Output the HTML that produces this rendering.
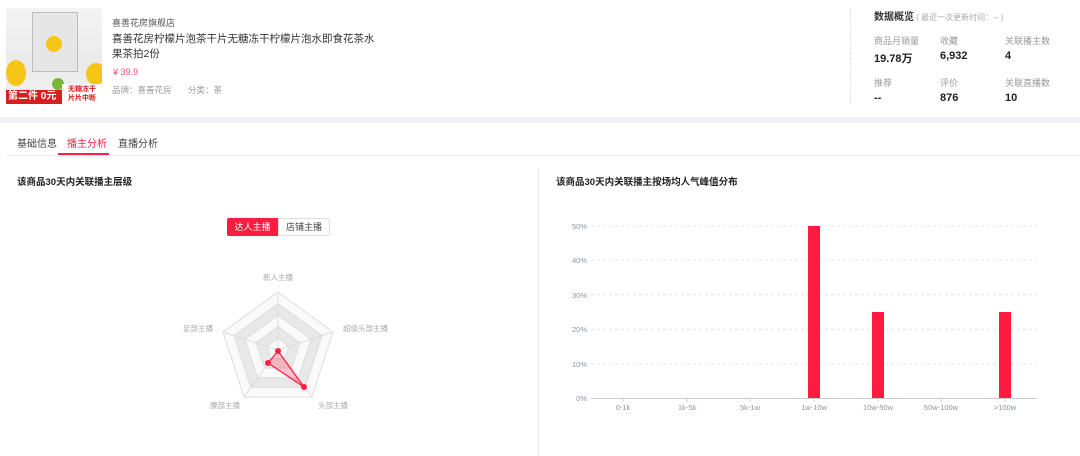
<!DOCTYPE html>
<html><head><meta charset="utf-8"><style>
*{margin:0;padding:0;box-sizing:border-box}
body{width:1080px;height:456px;background:#fff;font-family:"Liberation Sans","Noto Sans CJK SC",sans-serif;position:relative;overflow:hidden;color:#333}
.a{position:absolute;white-space:nowrap}
.s{font-size:9px;color:#999}
.v{font-size:11px;font-weight:bold;color:#222}
</style></head><body>
<!-- product image -->
<div class="a" style="left:6px;top:8px;width:96px;height:96px;background:linear-gradient(180deg,#f4f4f4 0%,#eaeaea 60%,#f2f2f2 100%);overflow:hidden">
  <div class="a" style="left:26px;top:4px;width:46px;height:60px;background:#e6e6e6;border:1px solid #bbb"></div>
  <div class="a" style="left:40px;top:28px;width:16px;height:16px;border-radius:50%;background:#f5c518"></div>
  <div class="a" style="left:0;top:52px;width:20px;height:26px;border-radius:50%;background:#f5c518"></div>
  <div class="a" style="left:80px;top:55px;width:20px;height:22px;border-radius:50%;background:#f5c518"></div>
  <div class="a" style="left:46px;top:70px;width:12px;height:12px;border-radius:50%;background:#7bb53a"></div>
  <div class="a" style="left:0;top:82px;width:56px;height:14px;background:#d81e1e;color:#fff;font-size:10px;font-weight:bold;line-height:14px;padding-left:2px">第二件 0元</div>
  <div class="a" style="left:56px;top:76px;width:40px;height:20px;background:#fff;color:#d81e1e;font-size:7px;font-weight:bold;line-height:9px;text-align:center;padding-top:1px">无糖冻干<br>片片中断</div>
</div>
<div class="a" style="left:112px;top:16px;font-size:9px;color:#555">喜善花房旗舰店</div>
<div class="a" style="left:112px;top:32px;font-size:10.5px;color:#333;line-height:15px">喜善花房柠檬片泡茶干片无糖冻干柠檬片泡水即食花茶水<br>果茶拍2份</div>
<div class="a" style="left:113px;top:67px;font-size:9px;color:#f0506e">¥ 39.9</div>
<div class="a" style="left:112px;top:84px;font-size:8.5px;color:#999">品牌：喜善花房&nbsp;&nbsp;&nbsp;&nbsp;&nbsp;&nbsp;&nbsp;分类：茶</div>
<!-- dashed divider -->
<div class="a" style="left:850px;top:8px;height:96px;border-left:1px dashed #e4e4e4"></div>
<div class="a" style="left:874px;top:8px;font-size:10px;color:#333;font-weight:bold">数据概览<span style="font-weight:normal;font-size:8px;color:#aaa"> ( 最近一次更新时间：-- )</span></div>
<div class="a s" style="left:874px;top:34px">商品月销量</div>
<div class="a s" style="left:940px;top:34px">收藏</div>
<div class="a s" style="left:1005px;top:34px">关联播主数</div>
<div class="a v" style="left:874px;top:50px">19.78万</div>
<div class="a v" style="left:940px;top:50px">6,932</div>
<div class="a v" style="left:1005px;top:50px">4</div>
<div class="a s" style="left:874px;top:76px">推荐</div>
<div class="a s" style="left:940px;top:76px">评价</div>
<div class="a s" style="left:1005px;top:76px">关联直播数</div>
<div class="a v" style="left:874px;top:92px">--</div>
<div class="a v" style="left:940px;top:92px">876</div>
<div class="a v" style="left:1005px;top:92px">10</div>
<!-- gray band -->
<div class="a" style="left:0;top:117px;width:1080px;height:6px;background:#f0f1f5"></div>
<!-- tabs -->
<div class="a" style="left:17px;top:135px;font-size:10px;color:#444">基础信息</div>
<div class="a" style="left:67px;top:135px;font-size:10px;color:#ff1e46">播主分析</div>
<div class="a" style="left:118px;top:135px;font-size:10px;color:#444">直播分析</div>
<div class="a" style="left:6px;top:155px;width:1074px;height:1px;background:#eee"></div>
<div class="a" style="left:58px;top:153px;width:51px;height:2px;background:#ff1e46"></div>
<!-- panels -->
<div class="a" style="left:538px;top:167px;width:1px;height:289px;background:#eee"></div>
<div class="a" style="left:17px;top:174px;font-size:9.5px;font-weight:bold;color:#222">该商品30天内关联播主层级</div>
<div class="a" style="left:556px;top:174px;font-size:9.5px;font-weight:bold;color:#222">该商品30天内关联播主按场均人气峰值分布</div>
<!-- toggle -->
<div class="a" style="left:227px;top:218px;width:51px;height:18px;background:#ff1a40;color:#fff;font-size:9px;line-height:18px;text-align:center;border-radius:2px 0 0 2px">达人主播</div>
<div class="a" style="left:278px;top:218px;width:52px;height:18px;border:1px solid #ddd;color:#444;font-size:9px;line-height:16px;text-align:center;border-radius:0 2px 2px 0">店铺主播</div>
<!-- radar -->
<svg class="a" style="left:0;top:0" width="540" height="456">
<g stroke="#ddd" stroke-width="1">
<polygon points="278,292 333,332 312,397 244,397 223,332" fill="#fafafa"/>
<polygon points="278,303.6 322,335.6 305.2,387.2 250.8,387.2 234,335.6" fill="#e8e8e8"/>
<polygon points="278,315.2 311,339.2 298.4,377.6 257.6,377.6 245,339.2" fill="#fafafa"/>
<polygon points="278,326.8 300,342.8 291.6,368 264.4,368 256,342.8" fill="#e8e8e8"/>
<polygon points="278,338.4 289,346.4 284.8,358.4 271.2,358.4 267,346.4" fill="#fafafa"/>
<line x1="278" y1="350" x2="278" y2="292"/><line x1="278" y1="350" x2="333" y2="332"/><line x1="278" y1="350" x2="312" y2="397"/><line x1="278" y1="350" x2="244" y2="397"/><line x1="278" y1="350" x2="223" y2="332"/>
</g>
<polygon points="278,351 304,387 268,363" fill="rgba(255,30,70,0.25)" stroke="#ff1e46" stroke-width="1.3"/>
<circle cx="278" cy="351" r="3" fill="#ff1e46"/><circle cx="304" cy="387" r="3" fill="#ff1e46"/><circle cx="268" cy="363" r="3" fill="#ff1e46"/>
<g font-size="7.5" fill="#aaa" font-family="Liberation Sans,Noto Sans CJK SC,sans-serif">
<text x="278" y="280" text-anchor="middle">新人主播</text>
<text x="343" y="331">超级头部主播</text>
<text x="213" y="331" text-anchor="end">足部主播</text>
<text x="225" y="408" text-anchor="middle">腰部主播</text>
<text x="333" y="408" text-anchor="middle">头部主播</text>
</g>
</svg>
<!-- bar chart -->
<svg class="a" style="left:540px;top:160px" width="540" height="260">
<g stroke="#e6e6e6" stroke-dasharray="3,3">
<line x1="51" y1="66" x2="497" y2="66"/><line x1="51" y1="100.4" x2="497" y2="100.4"/><line x1="51" y1="134.8" x2="497" y2="134.8"/><line x1="51" y1="169.2" x2="497" y2="169.2"/><line x1="51" y1="203.6" x2="497" y2="203.6"/>
</g>
<line x1="51" y1="238.5" x2="497" y2="238.5" stroke="#c8ccd6"/>
<g stroke="#c8ccd6"><line x1="83" y1="238" x2="83" y2="242"/><line x1="147" y1="238" x2="147" y2="242"/><line x1="210" y1="238" x2="210" y2="242"/><line x1="274" y1="238" x2="274" y2="242"/><line x1="338" y1="238" x2="338" y2="242"/><line x1="401" y1="238" x2="401" y2="242"/><line x1="465" y1="238" x2="465" y2="242"/></g>
<rect x="268" y="66" width="12" height="172" fill="#ff1a40"/>
<rect x="332" y="152" width="12" height="86" fill="#ff1a40"/>
<rect x="459" y="152" width="12" height="86" fill="#ff1a40"/>
<g font-size="7.5" fill="#8a94a6" font-family="Liberation Sans,sans-serif" text-anchor="end">
<text x="47" y="69">50%</text><text x="47" y="103">40%</text><text x="47" y="138">30%</text><text x="47" y="172">20%</text><text x="47" y="207">10%</text><text x="47" y="241">0%</text>
</g>
<g font-size="7.5" fill="#8a94a6" font-family="Liberation Sans,sans-serif" text-anchor="middle">
<text x="83" y="250">0-1k</text><text x="147" y="250">1k-5k</text><text x="210" y="250">5k-1w</text><text x="274" y="250">1w-10w</text><text x="338" y="250">10w-50w</text><text x="401" y="250">50w-100w</text><text x="465" y="250">&gt;100w</text>
</g>
</svg>
</body></html>
